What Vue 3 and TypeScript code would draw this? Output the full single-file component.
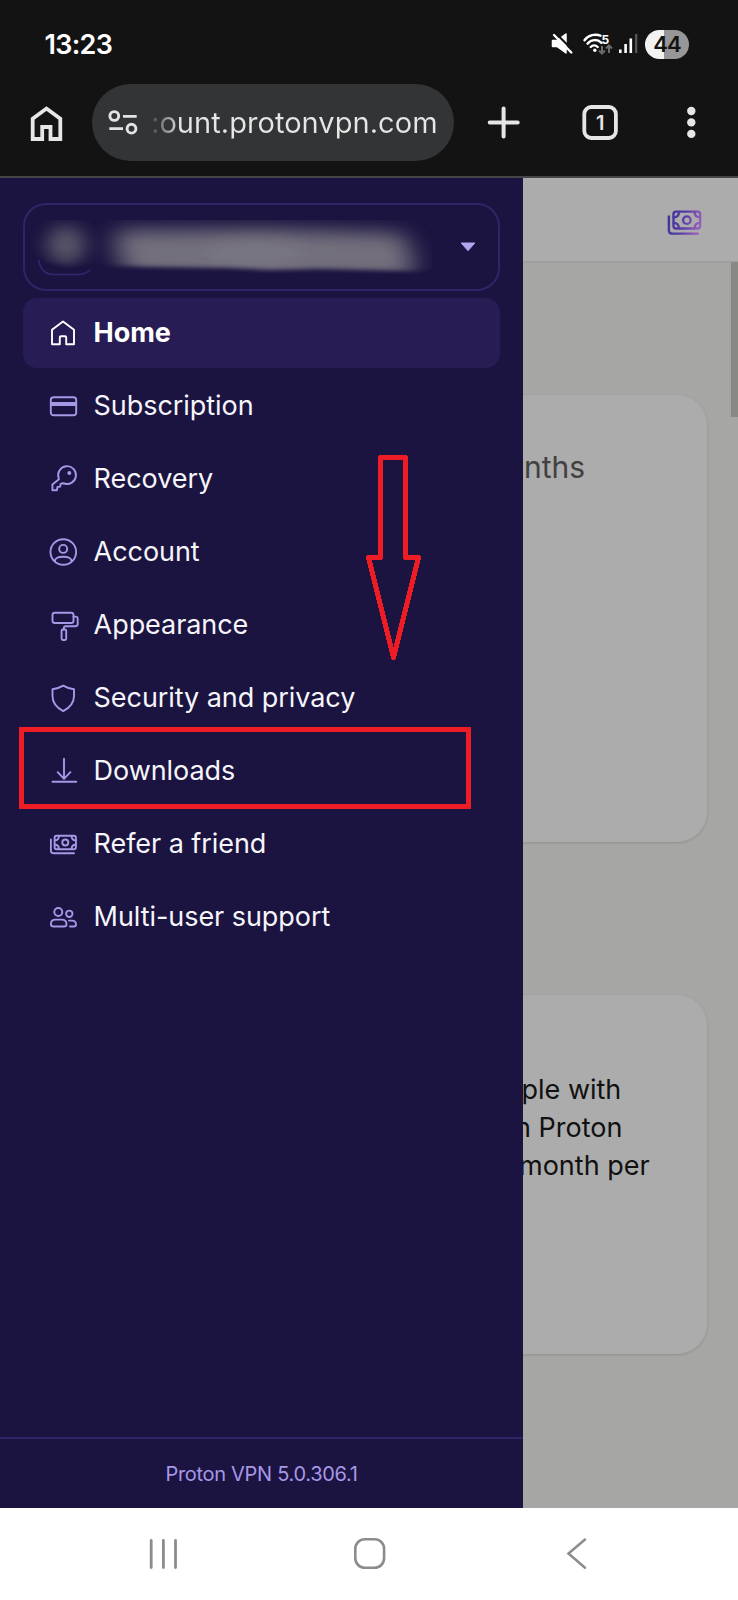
<script setup lang="ts">
interface NavItem {
  id: string
  label: string
  active?: boolean
}

const items: NavItem[] = [
  { id: 'home', label: 'Home', active: true },
  { id: 'card', label: 'Subscription' },
  { id: 'key', label: 'Recovery' },
  { id: 'account', label: 'Account' },
  { id: 'roller', label: 'Appearance' },
  { id: 'shield', label: 'Security and privacy' },
  { id: 'download', label: 'Downloads' },
  { id: 'money', label: 'Refer a friend' },
  { id: 'users', label: 'Multi-user support' },
]
</script>

<template>
  <div class="phone">
    <header class="chrome">
      <div class="status">
        <span class="time">13:23</span>
        <svg class="status-icons" width="92" height="32" viewBox="548 28 92 32">
          <path d="M552.500 40.500h4.500l9-6.500v19l-9-6.500H552.500z" fill="#fff" stroke="#fff" stroke-width="1.500" stroke-linejoin="round" />
          <path d="M555 32.500l19 19" stroke="#131314" stroke-width="2.200" />
          <path d="M554 35l17.300 17.500" stroke="#fff" stroke-width="2.400" stroke-linecap="round" />
          <g fill="none" stroke="#fff" stroke-width="2.400" stroke-linecap="round">
            <path d="M584.500 40.200c4-5.500 11-6.500 16-4.500" />
            <path d="M587.500 43.700c4-4.700 10-4.700 14-.8" />
            <path d="M590.700 47c2-2 5-2 7 0" />
          </g>
          <circle cx="594.800" cy="50.300" r="1.700" fill="#fff" />
          <text x="601.500" y="43.500" class="wifi-num">5</text>
          <path d="M602 46v7M599 50.500l3 3 3-3M609 53v-7M606 48.500l3-3 3 3" fill="none" stroke="#6b6b6b" stroke-width="2" />
          <g fill="#fff">
            <rect x="619" y="49.500" width="2.600" height="3.500" />
            <rect x="624.300" y="44" width="2.600" height="9" />
            <rect x="629.500" y="38.500" width="2.600" height="14.500" />
            <rect x="635" y="34" width="2.300" height="19" fill="#555" />
          </g>
        </svg>
        <span class="battery">44</span>
      </div>
      <div class="toolbar">
        <svg class="tb-home" width="34" height="38" viewBox="29 103 34 38">
          <path d="M32.700 138V117.700L46.500 107.500 60.300 117.700V138H50.500V126H42.200V138Z" fill="none" stroke="#e6e6e6" stroke-width="3.800" />
        </svg>
        <div class="url">
          <svg width="30" height="26" viewBox="108 110 30 26" fill="none" stroke="#e3e3e3" stroke-width="2.900">
            <circle cx="114.300" cy="116" r="4.400" />
            <path d="M123 116.400h13.700M109.300 128.600h13.700" />
            <circle cx="131.500" cy="128.700" r="4.400" />
          </svg>
          <span class="url-text">:ount.protonvpn.com</span>
        </div>
        <svg class="tb-actions" width="220" height="40" viewBox="484 103 220 40">
          <path d="M503.600 108.500v28M489.700 122.400h28" stroke="#e6e6e6" stroke-width="4" stroke-linecap="round" />
          <rect x="584.300" y="107" width="31.600" height="31" rx="7" fill="none" stroke="#e6e6e6" stroke-width="3.800" />
          <text x="600.200" y="129.500" text-anchor="middle" class="tab-num">1</text>
          <g fill="#e6e6e6">
            <circle cx="691.300" cy="111" r="4.200" />
            <circle cx="691.300" cy="122.400" r="4.200" />
            <circle cx="691.300" cy="133.900" r="4.200" />
          </g>
        </svg>
      </div>
    </header>

    <main class="viewport">
      <section class="page">
        <div class="page-head">
          <svg width="40" height="40" viewBox="0 0 32 32" fill="none" stroke="url(#cash)" stroke-width="1.900" stroke-linecap="round">
            <defs>
              <linearGradient id="cash" gradientUnits="userSpaceOnUse" x1="3" y1="10" x2="30" y2="18">
                <stop offset="0" stop-color="#40309b" />
                <stop offset=".5" stop-color="#5a3ea6" />
                <stop offset="1" stop-color="#9c62bb" />
              </linearGradient>
            </defs>
            <rect x="7.600" y="7.700" width="21.300" height="13.500" rx="2" />
            <circle cx="18.300" cy="14.500" r="3" />
            <path d="M3.900 11.500V22.500q0 2.800 2.800 2.800H27M7.800 12.300q4 0 4.200-4.300M7.800 16.700q4 0 4.200 4.300M28.700 12.300q-4 0-4.200-4.300M28.700 16.700q-4 0-4.200 4.300" />
          </svg>
        </div>
        <div class="card card-plan"><p class="plan">nths</p></div>
        <div class="card card-offer">
          <p class="offer"><span class="l1">ple with</span><span class="l2">n Proton</span><span class="l3">month per</span></p>
        </div>
        <div class="scrollbar"></div>
      </section>

      <aside class="drawer">
        <div class="user">
          <svg class="smudge" width="430" height="76" viewBox="30 208 430 76">
            <defs>
              <filter id="soft" x="-50%" y="-60%" width="200%" height="220%"><feGaussianBlur stdDeviation="9 8" /></filter>
              <filter id="soft2" x="-30%" y="-60%" width="160%" height="220%"><feGaussianBlur stdDeviation="13 9" /></filter>
              <filter id="edge" x="-5%" y="-10%" width="110%" height="120%"><feGaussianBlur stdDeviation="2" /></filter>
              <clipPath id="swipe"><path d="M30 208H445V262Q432 272 405 270L320 268 270 269 230 267 150 266 110 265Q95 262 85 263 65 268 48 261 38 256 30 250Z" /></clipPath>
            </defs>
            <path d="M38.500 259q3 14.500 15 14.500h25q7 0 12-5" fill="none" stroke="#32286e" stroke-width="1.500" />
            <g filter="url(#edge)">
              <g clip-path="url(#swipe)">
                <ellipse cx="66" cy="244" rx="20" ry="19" fill="#565266" filter="url(#soft)" />
                <path d="M117 229L270 228 400 232Q416 248 412 278L320 278 260 280 230 280 130 276Q112 252 117 229Z" fill="#73707d" filter="url(#soft2)" />
                <ellipse cx="255" cy="252" rx="50" ry="12" fill="#7f7c88" opacity=".6" filter="url(#soft)" />
              </g>
            </g>
          </svg>
          <svg class="caret" width="16" height="10" viewBox="0 0 16 10">
            <path d="M1.200 1h13.600L8 8.700z" fill="#b3a4f0" stroke="#b3a4f0" stroke-linejoin="round" />
          </svg>
        </div>

        <nav class="nav">
          <a v-for="item in items" :key="item.id" class="item" :class="{ active: item.active }">
            <svg class="icon" width="32" height="32" viewBox="0 0 32 32">
              <path v-if="item.id === 'home'" d="M5 27.200V12.800L16 4.400 27 12.800V27.200H19.200V20.500q0-1.200-1.200-1.200H14q-1.200 0-1.200 1.200V27.200Z" />
              <g v-else-if="item.id === 'card'">
                <rect x="3.800" y="7.300" width="25.400" height="18" rx="2.800" />
                <rect class="solid" x="4" y="12" width="25" height="4" />
              </g>
              <g v-else-if="item.id === 'key'">
                <path d="M11.600 14.800A8.900 8.900 0 1 1 17.200 20.500L15.500 20.200 13.500 21.200 13.200 23.600 10.500 24 9.900 27.200H5.400V21.600L11.900 16.200Z" />
                <circle class="solid" cx="22.300" cy="10.100" r="2" />
              </g>
              <g v-else-if="item.id === 'account'">
                <circle cx="16.300" cy="16" r="12.800" />
                <circle cx="16.200" cy="12.900" r="4" />
                <path d="M8 25.200c-.4-2.700 2.500-4.400 8.200-4.400s8.600 1.700 8.200 4.400" />
              </g>
              <g v-else-if="item.id === 'roller'">
                <rect x="5.500" y="3.800" width="21" height="10.200" rx="2.300" />
                <path d="M26.500 7.600h2q2.200 0 2.200 2.200v5.200q0 2.200-2.200 2.200H18.800q-2 0-2 2V20.500" />
                <rect x="14.600" y="20.500" width="4.600" height="10.500" rx="1.200" />
              </g>
              <path v-else-if="item.id === 'shield'" d="M16.200 3.600C13 5.600 9.500 6.700 5.500 7.200V14c0 6.500 4 11.600 10.700 15.200C23 25.600 27 20.500 27 14V7.200C23 6.700 19.500 5.600 16.200 3.600Z" />
              <path v-else-if="item.id === 'download'" d="M17 3.700V23.500M10.700 17.200L17 23.800 23.400 17.200M5.500 26.800H29.300" />
              <g v-else-if="item.id === 'money'">
                <rect x="7.600" y="7.700" width="21.300" height="13.500" rx="2" />
                <circle cx="18.300" cy="14.500" r="3" />
                <path d="M3.900 11.500V22.500q0 2.800 2.800 2.800H27M7.800 12.300q4 0 4.200-4.300M7.800 16.700q4 0 4.200 4.300M28.700 12.300q-4 0-4.200-4.300M28.700 16.700q-4 0-4.200 4.300" />
              </g>
              <g v-else>
                <circle cx="11.300" cy="11" r="4" />
                <circle cx="22.300" cy="12.800" r="3.200" />
                <path d="M6.800 25.500H16.800q2.700 0 2.700-2.300 0-4.600-4.800-4.600H8.500q-4.600 0-4.600 4.600 0 2.300 2.900 2.300ZM22 19.600h2.800q4.200 0 4.200 3.800 0 2.100-2.200 2.100H23" />
              </g>
            </svg>
            <span>{{ item.label }}</span>
          </a>
        </nav>

        <footer class="version">Proton VPN 5.0.306.1</footer>
      </aside>

      <div class="highlight"></div>
      <svg class="arrow" width="60" height="212" viewBox="363 452 60 212">
        <path d="M380.500 457.500H405.500V557.500H418.500L393.500 657.500 368.500 557.500H380.500Z" fill="none" stroke="#ee1c25" stroke-width="5" stroke-linejoin="round" shape-rendering="crispEdges" />
      </svg>
    </main>

    <div class="sysnav">
      <svg width="738" height="92" viewBox="0 1508 738 92" fill="none" stroke="#8c8c8c" stroke-linecap="round">
        <path d="M151.200 1540.500v27M163.400 1540.500v27M175.500 1540.500v27" stroke-width="2.800" />
        <rect x="355.300" y="1539.200" width="28.800" height="28.600" rx="9.500" stroke-width="2.600" />
        <path d="M585 1539.500L568.500 1553.500 585 1567.700" stroke-width="2.500" />
      </svg>
    </div>
  </div>
</template>

<style>
body {
  margin: 0;
}
</style>

<style scoped>
.phone {
  width: 738px;
  height: 1600px;
  display: flex;
  flex-direction: column;
  overflow: hidden;
  font-family: Inter, "Liberation Sans", sans-serif;
  background: #131314;
}
.chrome {
  height: 176px;
  border-bottom: 2px solid #454547;
  box-sizing: content-box;
}
.status {
  display: flex;
  align-items: center;
  height: 56px;
  padding: 16px 49px 12px 44.500px;
}
.time {
  flex: 1;
  color: #fff;
  font-size: 27px;
  font-weight: 600;
  letter-spacing: -0.7px;
}
.status-icons {
  margin-right: 5px;
}
.wifi-num {
  font-size: 12px;
  font-weight: 700;
  fill: #fff;
}
.battery {
  width: 44px;
  height: 29px;
  border-radius: 15px;
  background: linear-gradient(90deg, #f2f2f2 0 19px, #979797 19px);
  color: #131314;
  font-size: 22px;
  font-weight: 600;
  line-height: 29px;
  text-align: center;
  letter-spacing: -1px;
}
.toolbar {
  display: flex;
  align-items: center;
  height: 77px;
  padding-left: 29px;
}
.url {
  display: flex;
  align-items: center;
  width: 362px;
  height: 77px;
  margin: 0 30px 0 29px;
  padding-left: 16px;
  box-sizing: border-box;
  border-radius: 39px;
  background: #333436;
}
.url-text {
  margin-left: 13px;
  font-size: 29px;
  letter-spacing: 0.05px;
  white-space: nowrap;
  color: transparent;
  background: linear-gradient(90deg, rgba(230, 230, 230, 0.1) 0, #e6e6e6 30px);
  background-clip: text;
  -webkit-background-clip: text;
}
.tab-num {
  font-size: 20px;
  font-weight: 600;
  fill: #e6e6e6;
}
.viewport {
  position: relative;
  height: 1330px;
  overflow: hidden;
}
.page {
  height: 1330px;
  background: #a6a6a4;
}
.page-head {
  display: flex;
  justify-content: flex-end;
  height: 85px;
  padding: 24px 34px 0 0;
  box-sizing: border-box;
  background: #acacac;
  border-bottom: 2px solid #9f9f9e;
}
.card {
  width: 677px;
  margin-left: 30px;
  box-sizing: border-box;
  border-radius: 30px;
  background: #acacac;
  box-shadow: 0 1px 3px rgba(0, 0, 0, 0.14);
  overflow: hidden;
}
.card-plan {
  height: 447px;
  margin-top: 132px;
  padding: 52px 0 0 494px;
}
.plan {
  margin: 0;
  font-size: 30px;
  line-height: 40px;
  color: #414141;
}
.card-offer {
  height: 359px;
  margin-top: 153px;
  padding: 76px 0 0 480px;
}
.offer {
  margin: 0;
  font-size: 27px;
  line-height: 38.100px;
  color: #111;
}
.offer span {
  display: block;
  white-space: nowrap;
}
.offer .l1 {
  padding-left: 11.500px;
}
.offer .l2 {
  padding-left: 5px;
}
.offer .l3 {
  padding-left: 9px;
}
.scrollbar {
  position: absolute;
  top: 84px;
  right: 0;
  width: 7.500px;
  height: 155px;
  background: #888885;
}
.drawer {
  position: absolute;
  inset: 0 auto 0 0;
  display: flex;
  flex-direction: column;
  width: 523px;
  background: #1b1340;
}
.user {
  display: flex;
  align-items: center;
  height: 88px;
  margin: 25px 23px 0;
  box-sizing: border-box;
  border: 2px solid #2f2667;
  border-radius: 23px;
}
.smudge {
  margin-left: 5px;
}
.nav {
  display: flex;
  flex-direction: column;
  gap: 2.600px;
  margin: 6.500px 23px 0;
}
.item {
  display: flex;
  align-items: center;
  height: 70.450px;
  padding-left: 24px;
  border-radius: 14px;
  color: #f6f5fa;
  font-size: 27px;
}
.item span {
  margin: 0 0 0.500px 14.600px;
  letter-spacing: -0.06px;
  white-space: nowrap;
}
.active {
  background: #271c54;
  color: #fff;
  font-weight: 700;
}
.icon {
  overflow: visible;
  fill: none;
  stroke: #a698e6;
  stroke-width: 1.900;
  stroke-linecap: round;
  stroke-linejoin: round;
}
.icon .solid {
  fill: #a698e6;
  stroke: none;
}
.active .icon {
  stroke: #fff;
}
.version {
  margin-top: auto;
  height: 69px;
  border-top: 2px solid #2f2665;
  line-height: 71px;
  text-align: center;
  font-size: 20px;
  letter-spacing: -0.300px;
  color: #a698e6;
}
.highlight {
  position: absolute;
  left: 19px;
  top: 549px;
  width: 452px;
  height: 82px;
  box-sizing: border-box;
  border: 5px solid #ee1c25;
}
.arrow {
  position: absolute;
  left: 363px;
  top: 274px;
}
.sysnav {
  height: 92px;
  background: #fff;
}
</style>
